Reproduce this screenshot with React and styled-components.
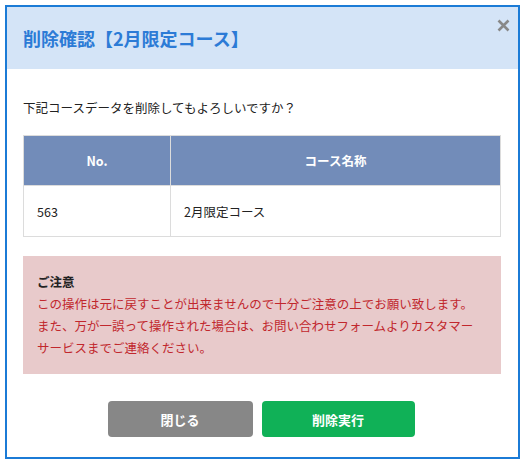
import React from "react";
import styled, { createGlobalStyle } from "styled-components";

const Global = createGlobalStyle`
  html, body { margin: 0; padding: 0; background: #fff; }
  body { padding: 5px; font-family: "Noto Sans CJK JP", "Noto Sans", sans-serif; color: #222; }
  * { box-sizing: border-box; }
`;

const Dialog = styled.div`
  width: 515px;
  height: 454px;
  border: 2px solid #1b7bd6;
  background: #fff;
  display: flex;
  flex-direction: column;
`;

const Header = styled.div`
  position: relative;
  height: 62px;
  background: #d4e4f7;
  display: flex;
  align-items: center;
  padding-left: 16px;
`;

const Title = styled.h1`
  margin: 0;
  font-size: 18px;
  font-weight: 700;
  color: #2c7bd6;
  letter-spacing: 0;
`;

const Close = styled.button`
  position: absolute;
  top: 10px;
  right: 7px;
  width: 16px;
  height: 16px;
  padding: 0;
  border: 0;
  background: none;
  display: flex;
  align-items: center;
  justify-content: center;
`;

const Body = styled.div`
  flex: 1;
  padding: 29px 17px 20px 16px;
  display: flex;
  flex-direction: column;
`;

const Lead = styled.p`
  margin: 0 0 17px;
  font-size: 12.5px;
  line-height: 20px;
  color: #222;
`;

const Table = styled.table`
  width: 100%;
  border-collapse: collapse;
  font-size: 12.5px;
`;

const Th = styled.th`
  height: 50px;
  background: #728cb9;
  color: #fff;
  font-weight: 700;
  text-align: center;
  border: 1px solid #dcdcdc;
  width: ${(p) => p.$w || "auto"};
`;

const Td = styled.td`
  height: 51px;
  border: 1px solid #dcdcdc;
  padding: 0 13px;
  color: #222;
`;

const Notice = styled.div`
  margin-top: 19px;
  background: #e8cacb;
  padding: 15px 14px 13px;
  height: 118px;
`;

const NoticeTitle = styled.div`
  font-size: 12.5px;
  font-weight: 700;
  line-height: 22px;
  color: #222;
`;

const NoticeText = styled.p`
  margin: 0;
  font-size: 12.5px;
  line-height: 22px;
  color: #c1272d;
`;

const Actions = styled.div`
  margin-top: auto;
  display: flex;
  justify-content: center;
  gap: 9px;
  padding-right: 2px;
`;

const Button = styled.button`
  width: ${(p) => p.$w}px;
  height: 36px;
  border: 0;
  border-radius: 4px;
  background: ${(p) => p.$bg};
  color: #fff;
  font-family: inherit;
  font-size: 13px;
  font-weight: 700;
`;

export default function App() {
  return (
    <>
      <Global />
      <Dialog>
        <Header>
          <Title>削除確認【2月限定コース】</Title>
          <Close aria-label="close">
            <svg width="13" height="13" viewBox="0 0 13 13">
              <path d="M1.5 1.5 L11.5 11.5 M11.5 1.5 L1.5 11.5" stroke="#888" strokeWidth="2.6" strokeLinecap="butt" />
            </svg>
          </Close>
        </Header>
        <Body>
          <Lead>下記コースデータを削除してもよろしいですか？</Lead>
          <Table>
            <thead>
              <tr>
                <Th $w="147px">No.</Th>
                <Th>コース名称</Th>
              </tr>
            </thead>
            <tbody>
              <tr>
                <Td>563</Td>
                <Td>2月限定コース</Td>
              </tr>
            </tbody>
          </Table>
          <Notice>
            <NoticeTitle>ご注意</NoticeTitle>
            <NoticeText>
              この操作は元に戻すことが出来ませんので十分ご注意の上でお願い致します。
              <br />
              また、万が一誤って操作された場合は、お問い合わせフォームよりカスタマー
              <br />
              サービスまでご連絡ください。
            </NoticeText>
          </Notice>
          <Actions>
            <Button $w={145} $bg="#878787">閉じる</Button>
            <Button $w={153} $bg="#10b157">削除実行</Button>
          </Actions>
        </Body>
      </Dialog>
    </>
  );
}
